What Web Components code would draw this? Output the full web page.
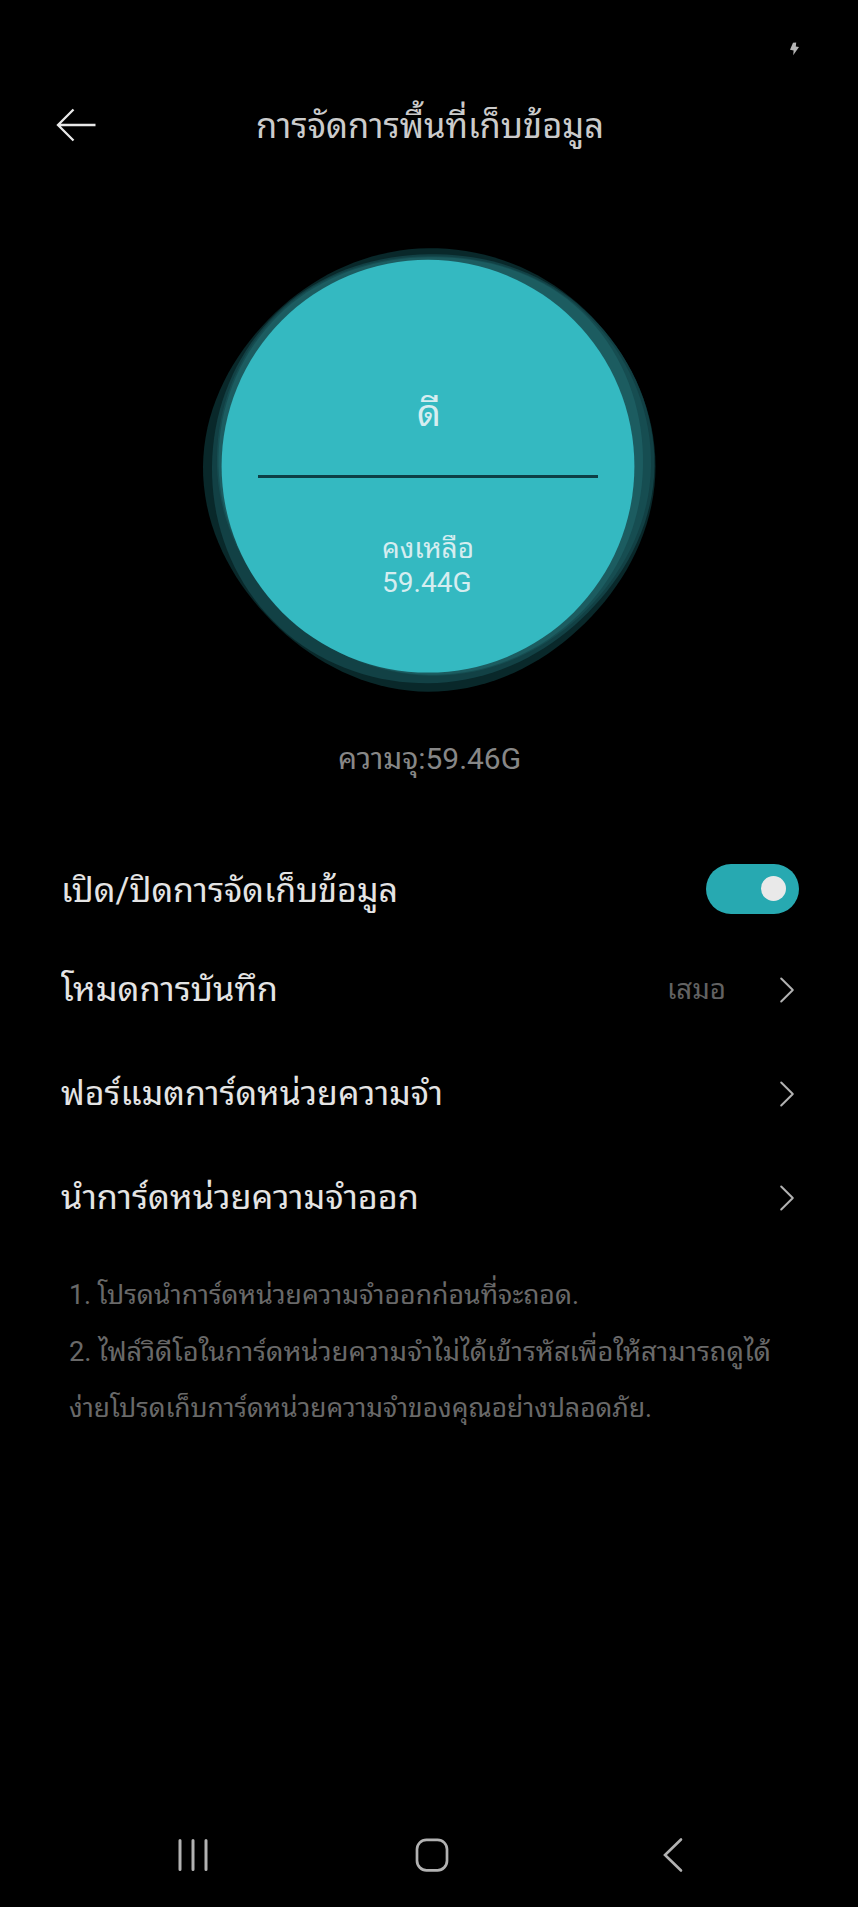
<!DOCTYPE html>
<html lang="th">
<head>
<meta charset="utf-8">
<title>การจัดการพื้นที่เก็บข้อมูล</title>
<style>
html,body{margin:0;background:#000}
body{font-family:Roboto,"Noto Sans Thai Looped","Noto Sans Thai","Noto Sans",sans-serif}
</style>
</head>
<body>
<storage-screen></storage-screen>
<script>
const define=(name,html,setup)=>customElements.define(name,class extends HTMLElement{
  connectedCallback(){
    if(this.shadowRoot)return;
    const t=document.createElement('template');t.innerHTML=html;
    this.attachShadow({mode:'open'}).append(t.content.cloneNode(true));
    if(setup)setup(this,this.shadowRoot);
  }
});

/* Single line of text set to a given measure. */
define('text-line',`<style>:host{display:block;white-space:nowrap;flex:none}
span{display:inline-block;vertical-align:top;transform-origin:0 50%;line-height:inherit}</style><span><slot></slot></span>`,(el,root)=>{
  const s=root.querySelector('span');
  el.style.width=el.getAttribute('measure')+'px';
  el.style.fontSize=el.getAttribute('size')+'px';
  const n=s.getBoundingClientRect().width;
  if(n)s.style.transform=`scaleX(${el.getBoundingClientRect().width/n})`;
});

define('status-bar',`<style>:host{display:flex;justify-content:flex-end;height:91px;padding:42px 58px 0 0;box-sizing:border-box}</style>
<svg width="11" height="14" viewBox="0 0 11 14"><path d="M4 .8 7.2 .5 6.8 4.5 10 5 4.2 13.2 4.6 8.4 1 7.8Z" fill="#b4b4b4"/></svg>`);

define('title-bar',`<style>:host{display:flex;align-items:center;height:69px;padding-left:56px;color:#cbcbcb;line-height:46px}
svg{display:block;flex:none;margin-right:158.5px;margin-bottom:1px}
slot{display:block;padding-top:1px}</style>
<svg width="41" height="34" viewBox="0 0 41 34"><path d="M39.5 17H2M17.5 1.5 2 17 17.5 32.5" fill="none" stroke="#e8e8e8" stroke-width="2.3"/></svg>
<slot></slot>`);

define('storage-gauge',`<style>:host{display:grid;width:460px;height:450px;margin:85px 0 0 199px;line-height:34px;color:#d6edf0}
svg,.labels{grid-area:1/1}
.labels{display:flex;flex-direction:column;align-items:center;padding-right:2px}
.state{margin:145px 0 0 2px;line-height:46px}
hr{width:340px;height:2.5px;border:0;margin:39px 0 0;background:#0d3f46}
.left{margin-top:54px}</style>
<svg width="460" height="450" viewBox="0 0 460 450"><g id="g"></g><circle cx="229" cy="221.2" r="206.4" fill="#34b9c1"/></svg>
<div class="labels"><div class="state"><slot name="state"></slot></div><hr><div class="left"><slot></slot></div></div>`,(el,root)=>{
  /* Halo outlines as distances from the disc centre, clockwise from the right in 45 degree steps. */
  const halos=[
    ['#09282a',[227.5,222,225.5,220,225,216.5,218,221.5]],
    ['#124145',[226.5,216.5,217,219,216,215.3,212,221]],
    ['#164d51',[223,213.5,209.5,205,211,214,210,219.5]],
    ['#1c5c60',[215,211.5,208.5,204,209.5,212.5,209,218]]];
  root.getElementById('g').innerHTML=halos.map(([fill,r])=>{
    const p=[];
    for(let k=0;k<144;k++){
      const i=Math.floor(k/18),t=(k%18)/18,a=r[(i+7)%8],b=r[i],c=r[(i+1)%8],d=r[(i+2)%8];
      const v=.5*(2*b+(c-a)*t+(2*a-5*b+4*c-d)*t*t+(3*b-a-3*c+d)*t*t*t),q=k*Math.PI/72;
      p.push((229+v*Math.cos(q)).toFixed(2)+','+(221.2+v*Math.sin(q)).toFixed(2));
    }
    return `<polygon points="${p.join(' ')}" fill="${fill}"/>`;
  }).join('');
});

define('setting-row',`<style>:host{display:flex;align-items:center;justify-content:space-between;height:104px;padding:0 60.5px 0 60.5px;color:#e4e4e4;line-height:50px}
div{display:flex;align-items:center;color:#626262}
slot:not([name]){display:block;padding-bottom:3px}</style>
<slot></slot><div><slot name="end"></slot></div>`);

define('chevron-icon',`<style>:host{display:block;margin:0 3px 0 52.5px}svg{display:block}</style>
<svg width="16" height="28" viewBox="0 0 16 28"><path d="M2.2 2.5 13.8 14 2.2 25.5" fill="none" stroke="#b2b2b2" stroke-width="2" stroke-linecap="round" stroke-linejoin="round"/></svg>`);

define('toggle-switch',`<style>:host{display:flex;align-items:center;justify-content:flex-end;width:93px;height:50px;border-radius:25px;background:#27a9b1;padding-right:12.5px;box-sizing:border-box;margin:0 -1px 5px 0}
i{width:25.5px;height:25.5px;border-radius:50%;background:#e9e9e9}</style><i></i>`);

define('nav-bar',`<style>:host{display:flex;align-items:center;justify-content:space-between;height:40px;padding:0 174px 0 177px}svg{display:block}.home{margin-right:7px}</style>
<svg width="32" height="36" viewBox="0 0 32 36"><path d="M3 3.5v29M16 3.5v29M29 3.5v29" stroke="#b2b2b2" stroke-width="3" stroke-linecap="round"/></svg>
<svg class="home" width="36" height="36" viewBox="0 0 36 36"><rect x="3" y="2.8" width="30" height="30.5" rx="9.5" fill="none" stroke="#b2b2b2" stroke-width="2.7"/></svg>
<svg width="22" height="36" viewBox="0 0 22 36"><path d="M19 2.5 3 18 19 33.5" fill="none" stroke="#b2b2b2" stroke-width="2.6" stroke-linecap="round"/></svg>`);

define('storage-screen',`<style>:host{display:flex;flex-direction:column;width:858px;height:1907px;background:#000;overflow:hidden}
.cap{margin:44px 0 0 337.5px;line-height:40px;color:#878787}
.rows{margin-top:65px}
setting-row.first{height:94px}
.notes{margin:17px 0 0 69px;line-height:56.5px;color:#696969}
nav-bar{margin-top:auto;margin-bottom:32px}</style>
<status-bar></status-bar>
<title-bar><text-line size="34.3" measure="348">การจัดการพื้นที่เก็บข้อมูล</text-line></title-bar>
<storage-gauge>
<text-line slot="state" size="37.5" measure="24">ดี</text-line>
<text-line size="28" measure="92">คงเหลือ</text-line>
<text-line size="28" measure="89.5">59.44G</text-line>
</storage-gauge>
<text-line class="cap" size="29.5" measure="183">ความจุ:59.46G</text-line>
<div class="rows">
<setting-row class="first"><text-line size="34.2" measure="337">เปิด/ปิดการจัดเก็บข้อมูล</text-line><toggle-switch slot="end"></toggle-switch></setting-row>
<setting-row><text-line size="34.2" measure="217">โหมดการบันทึก</text-line><text-line slot="end" size="27.6" measure="59">เสมอ</text-line><chevron-icon slot="end"></chevron-icon></setting-row>
<setting-row><text-line size="34.2" measure="382">ฟอร์แมตการ์ดหน่วยความจำ</text-line><chevron-icon slot="end"></chevron-icon></setting-row>
<setting-row><text-line size="34.2" measure="358">นำการ์ดหน่วยความจำออก</text-line><chevron-icon slot="end"></chevron-icon></setting-row>
</div>
<div class="notes">
<text-line size="27" measure="510">1. โปรดนำการ์ดหน่วยความจำออกก่อนที่จะถอด.</text-line>
<text-line size="27" measure="702">2. ไฟล์วิดีโอในการ์ดหน่วยความจำไม่ได้เข้ารหัสเพื่อให้สามารถดูได้</text-line>
<text-line size="27" measure="583">ง่ายโปรดเก็บการ์ดหน่วยความจำของคุณอย่างปลอดภัย.</text-line>
</div>
<nav-bar></nav-bar>`);
</script>
</body>
</html>
